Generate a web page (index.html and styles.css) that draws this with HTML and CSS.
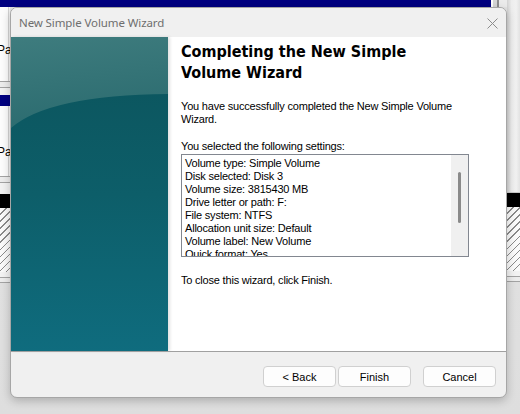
FILE: index.html
```html
<!DOCTYPE html>
<html lang="en">
<head>
  <meta charset="UTF-8">
  <title>New Simple Volume Wizard</title>
  <link rel="stylesheet" href="styles.css">
</head>
<body>
  <div class="desk">
    <div class="topbar"></div>

    <!-- windows behind the wizard, left edge -->
    <div class="strip strip-left">
      <div class="pane"><span>Pa</span></div>
      <div class="rule"></div>
      <div class="gap"></div>
      <div class="band"></div>
      <div class="pane pane-low"><span>Pa</span></div>
      <div class="rule"></div>
      <div class="gap gap-tall"></div>
      <div class="black"></div>
      <div class="hatch"></div>
      <div class="gap gap-short"></div>
      <div class="rule rule-thin"></div>
    </div>

    <div class="wizard">
      <div class="titlebar">
        <span class="title">New Simple Volume Wizard</span>
        <svg class="close" width="11" height="11" viewBox="0 0 11 11">
          <path d="M0.5 0.5 L10.5 10.5 M10.5 0.5 L0.5 10.5" stroke="#8c8c8c" stroke-width="1" fill="none"/>
        </svg>
      </div>

      <div class="main">
        <div class="art">
          <svg width="157" height="314" viewBox="0 0 157 314">
            <defs>
              <linearGradient id="deep" x1="0" y1="0" x2="0" y2="1">
                <stop offset="0" stop-color="#0b535b"/>
                <stop offset="0.5" stop-color="#0d5e69"/>
                <stop offset="1" stop-color="#0f6c7e"/>
              </linearGradient>
              <linearGradient id="sheen" x1="0" y1="0" x2="0.2" y2="1">
                <stop offset="0" stop-color="#3e7c7e"/>
                <stop offset="1" stop-color="#2c6c70"/>
              </linearGradient>
            </defs>
            <rect width="157" height="314" fill="url(#deep)"/>
            <path d="M0 91 Q38 58 157 57 V0 H0 Z" fill="url(#sheen)"/>
          </svg>
        </div>

        <div class="content">
          <h1>Completing the New Simple Volume Wizard</h1>
          <p class="intro">You have successfully completed the New Simple Volume Wizard.</p>
          <p>You selected the following settings:</p>

          <div class="settings">
            <div class="items">
              <div>Volume type: Simple Volume</div>
              <div>Disk selected: Disk 3</div>
              <div>Volume size: 3815430 MB</div>
              <div>Drive letter or path: F:</div>
              <div>File system: NTFS</div>
              <div>Allocation unit size: Default</div>
              <div>Volume label: New Volume</div>
              <div>Quick format: Yes</div>
            </div>
            <div class="scroll"><div class="thumb"></div></div>
          </div>

          <p class="outro">To close this wizard, click Finish.</p>
        </div>
      </div>

      <div class="footer">
        <button>&lt; Back</button>
        <button>Finish</button>
        <button class="cancel">Cancel</button>
      </div>
    </div>

    <!-- windows behind the wizard, right edge -->
    <div class="strip strip-right">
      <div class="pane-side"></div>
      <div class="black"></div>
      <div class="hatch"></div>
      <div class="gap gap-short"></div>
      <div class="rule rule-thin"></div>
    </div>
  </div>
</body>
</html>
```

FILE: styles.css
```css
* { box-sizing: border-box; }
body { margin: 0; width: 520px; height: 414px; overflow: hidden; background: #e2e2e2; font-family: "Liberation Sans", Arial, sans-serif; font-size: 11px; color: #000; }

.desk { display: grid; grid-template-columns: 10px 497px 13px; grid-template-rows: 7px 391px 16px; height: 414px; background: linear-gradient(to bottom, #e4e4e4, #dedede); }
.topbar { grid-column: 1 / 3; grid-row: 1; background: linear-gradient(to right, #000080 0 491px, #fff 491px 493px, #d6d6d6 493px 497px, #8e8e8e 497px 499px, #ebebeb 499px); }

/* background windows */
.strip { display: flex; flex-direction: column; overflow: hidden; }
.strip-left { grid-column: 1; grid-row: 2 / 4; }
.strip-right { grid-column: 3; grid-row: 1 / 4; }
.pane { height: 74px; padding-top: 36px; background: linear-gradient(to right, #fcfcfc 0 8px, #d4d4d4 8px 9px, #f4f4f4 9px); font-size: 12px; line-height: 14px; white-space: nowrap; }
.pane span { margin-left: -3px; }
.pane-low { height: 70px; padding-top: 39px; }
.rule { height: 7px; border-top: 1px solid #a3a3a3; border-bottom: 1px solid #a3a3a3; background: #ececec; }
.rule-thin { height: 6px; }
.gap { height: 7px; background: #f2f2f2; }
.gap-tall { height: 11px; }
.gap-short { height: 5px; }
.band { height: 11px; background: #000080; }
.black { height: 14px; background: #000; }
.hatch { height: 64px; background: repeating-linear-gradient(135deg, #fafafa 0 4px, #8a8a8a 4px 5px); }
.pane-side { height: 193px; background: linear-gradient(to right, #d2d2d2, #ededed 35%, #f1f1f1 70%, #e2e2e2); border-bottom: 1px solid #c8c8c8; }

/* wizard window */
.wizard { grid-column: 2; grid-row: 2; display: flex; flex-direction: column; background: #f0f0f0; border: 1px solid #a6a6a6; border-radius: 7px; overflow: hidden; box-shadow: 0 3px 10px rgba(0,0,0,0.22); z-index: 1; }
.titlebar { height: 29px; flex: none; display: flex; align-items: center; justify-content: space-between; padding: 0 8px 0 8px; background: #f0f0f0; }
.title { font-family: "Noto Sans", sans-serif; font-size: 11.5px; letter-spacing: -0.1px; color: #6e6e6e; }
.close { margin-top: 1px; }

.main { height: 314px; flex: none; display: flex; background: #fff; }
.art { width: 157px; flex: none; box-shadow: 2px 0 3px rgba(0,0,0,0.12); }
.art svg { display: block; }
.content { flex: 1; padding: 4px 37px 0 13px; letter-spacing: -0.2px; }

h1 { margin: 0 0 17px; font-family: "DejaVu Sans Condensed", "DejaVu Sans", Verdana, sans-serif; font-stretch: semi-condensed; font-size: 16px; line-height: 21px; font-weight: bold; letter-spacing: 0; }
p { margin: 0; line-height: 13px; }
.intro { margin-bottom: 14px; }
.outro { margin-top: 17px; }

.settings { height: 103px; margin-top: 1px; display: flex; border: 1px solid #828790; }
.items { flex: 1; padding: 2px 3px; overflow: hidden; line-height: 13px; white-space: nowrap; }
.scroll { width: 17px; flex: none; background: #f0f0f0; display: flex; justify-content: center; padding-top: 17px; }
.thumb { width: 3px; height: 51px; background: #8a8a8a; border-radius: 2px; }

.footer { flex: 1; display: flex; justify-content: flex-end; align-items: flex-start; gap: 2px; padding: 14px 10px 0 0; border-top: 1px solid #a0a0a0; }
button { width: 73px; height: 21px; padding: 0; font-family: "Liberation Sans", Arial, sans-serif; font-size: 11px; color: #000; background: #fdfdfd; border: 1px solid #d0d0d0; border-radius: 4px; }
.cancel { margin-left: 10px; }
```
